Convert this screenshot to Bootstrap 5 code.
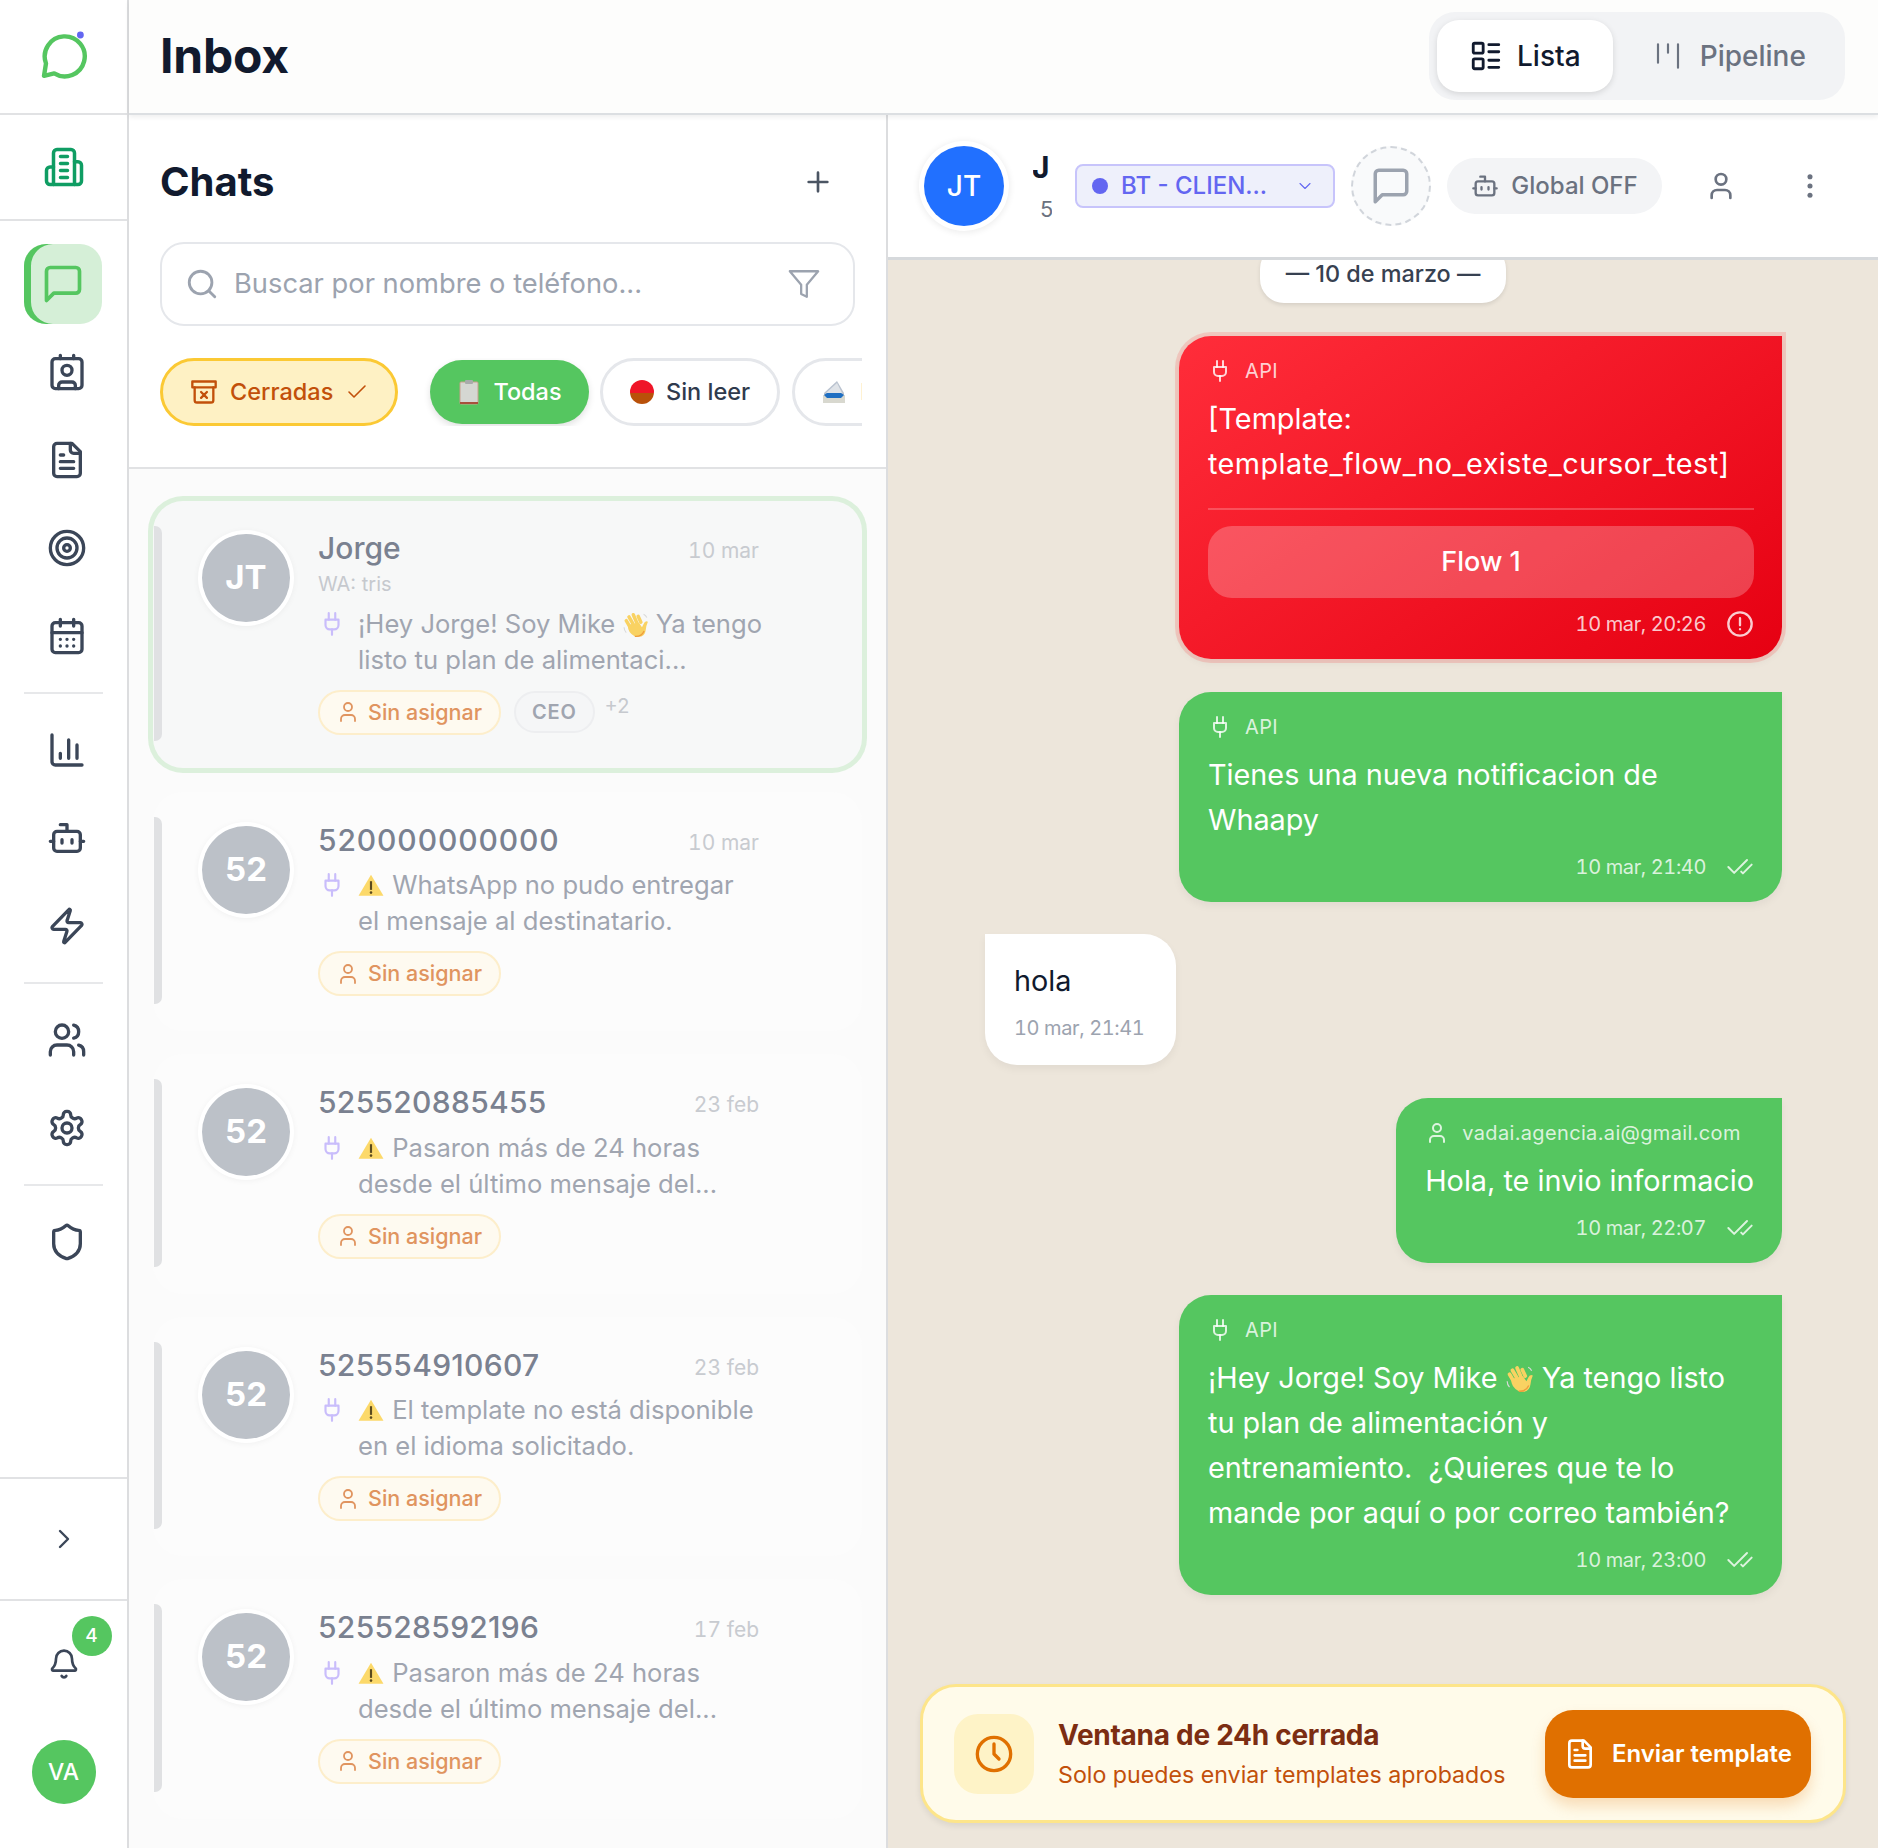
<!DOCTYPE html>
<html lang="es">
<head>
    <meta charset="UTF-8">
    <meta name="viewport" content="width=device-width, initial-scale=1.0">
    <title>Inbox</title>
    <link href="https://cdn.jsdelivr.net/npm/bootstrap@5.3.0/dist/css/bootstrap.min.css" rel="stylesheet">
    <style>
        body { font-family: "Inter", "Noto Sans", sans-serif; background: #fff; color: #111827; }
        .ico { fill: none; stroke: currentColor; stroke-width: 2; stroke-linecap: round; stroke-linejoin: round; flex-shrink: 0; }

        /* left rail */
        .rail { width: 129px; flex-shrink: 0; border-right: 2px solid #dcdddf; background: #fff; }
        .rail-logo { height: 115px; padding-bottom: 4px; border-bottom: 2px solid #e1e2e4; }
        .rail-org { height: 106px; border-bottom: 2px solid #e1e2e4; color: #0f9d63; }
        .rail-nav { padding: 23px 24px 0; }
        .rail-item { width: 78px; height: 80px; margin-bottom: 8px; padding-left: 8px; color: #3b4658; border-radius: 22px; }
        .rail-item.is-active { padding-left: 0; color: #55c660; background: #d5efd7; box-shadow: inset 7px 0 0 #55c660; }
        .rail-sep { height: 2px; background: #e7e8ea; margin: 16px 0; }
        .rail-toggle { height: 122px; border-top: 2px solid #e1e2e4; color: #3b4658; }
        .rail-foot { border-top: 2px solid #e1e2e4; padding-top: 43px; height: 249px; color: #3b4658; }
        .bell-wrap { width: 40px; height: 40px; margin-bottom: 56px; }
        .bell-count { top: -28px; left: 28px; width: 40px; height: 40px; background: #55c660; color: #fff; font-size: 19px; font-weight: 500; }
        .me-avatar { width: 64px; height: 64px; background: #55c660; color: #fff; font-size: 23px; font-weight: 500; }

        /* top bar */
        .top-bar { height: 115px; padding: 0 33px 1px 31px; background: #fdfdfc; border-bottom: 2px solid #dcdfe2; box-shadow: 0 2px 5px rgba(0,0,0,.07); position: relative; z-index: 5; }
        .page-title { font-size: 48px; font-weight: 700; letter-spacing: -.005em; color: #111a2e; margin: 0; }
        .view-switch { width: 416px; height: 88px; padding: 8px; background: #f2f3f5; border-radius: 26px; }
        .view-btn { height: 72px; font-size: 28px; font-weight: 500; border: 0; border-radius: 22px; gap: 14px; color: #6b7280; padding: 0; }
        .view-btn.is-on { width: 176px; background: #fff; color: #111a2e; box-shadow: 0 2px 6px rgba(0,0,0,.12); }
        .view-btn.is-off { width: 225px; padding-left: 4px; gap: 12px; }

        /* chat list */
        .list-pane { width: 759px; flex-shrink: 0; border-right: 2px solid #dcdddf; background: #fbfbfb; }
        .list-head { background: #fff; padding: 43px 0 41px 31px; border-bottom: 2px solid #e1e2e4; }
        .list-title { font-size: 40px; font-weight: 700; color: #111a2e; margin: 0; line-height: 48px; }
        .add-chat { color: #4b5563; margin-right: 52px; }
        .search-box { width: 695px; height: 84px; margin: 36px 0 32px; padding: 0 32px 0 23px; border: 2px solid #e5e7eb; border-radius: 24px; color: #9ca3af; background: #fff; }
        .search-box .form-control { font-size: 27.3px; padding: 1px 0 0 15px; border: 0; box-shadow: none; color: #374151; background: transparent; }
        .search-box .form-control::placeholder { color: #9ca3af; }
        .filter-row { width: 702px; overflow: hidden; }
        .filter-chip { flex-shrink: 0; height: 68px; font-size: 23.5px; font-weight: 500; border: 3px solid #e5e7eb; border-radius: 34px; color: #2f3a4d; background: #fff; gap: 12px; padding: 0 27px; }
        .chip-closed { width: 238px; background: #fef1c4; border-color: #fbc934; color: #c2500a; margin-right: 32px; padding: 0 0 0 27px; }
        .chip-all { height: 64px; width: 159px; background: #55c660; border: 0; color: #fff; margin-right: 11px; box-shadow: 0 3px 7px rgba(0,0,0,.12); }
        .chip-rest { margin-left: 12px; width: 200px; justify-content: flex-start; gap: 14px; }

        .list-body { padding: 32px 24px 0; }
        .chat-row { margin-bottom: 23px; padding: 30px 0 35px 49px; gap: 28px; background: #fcfcfc; border-radius: 30px; }
        .chat-row.is-open { background: #f7f8f8; box-shadow: 0 0 0 5px #dcf0dc; margin-bottom: 24px; padding: 29px 0 33px 49px; }
        .row-bar { left: 1px; top: 25px; bottom: 27px; width: 8px; background: #e0e1e3; border-radius: 0 7px 7px 0; }
        .row-avatar { width: 88px; height: 88px; margin-top: 4px; background: #bcc1c8; color: #fff; font-size: 33px; font-weight: 700; box-shadow: 0 0 0 4px #fff, 0 1px 7px 3px rgba(0,0,0,.06); flex-shrink: 0; }
        .row-main { width: 441px; }
        .row-name { font-size: 30px; font-weight: 500; line-height: 36px; color: #7a8190; }
        .row-phone { letter-spacing: .3px; }
        .row-phone.is-zeros { letter-spacing: .9px; }
        .row-date { font-size: 21px; color: #c8cbd0; font-feature-settings: "tnum"; margin-top: 5px; }
        .row-wa { font-size: 20px; color: #c6c9ce; line-height: 24px; margin: 5px 0 10px; }
        .row-text { font-size: 25.6px; line-height: 36px; color: #a0a5b0; margin: 9px 0 12px; gap: 13px; white-space: nowrap; }
        .is-open .row-text { margin-top: 0; }
        .row-plug { color: #c9bdfb; margin: 5px 0 0 1px; }
        .warn-mark { vertical-align: -4px; margin-right: 1px; }
        .wave-mark { vertical-align: -5px; }
        .tag-open { height: 45px; padding: 0 17px 0 16px; font-size: 21.5px; font-weight: 500; color: #e0945f; background: #fefaf0; border: 2px solid #fdeecb; border-radius: 23px; gap: 8px; }
        .tag-role { height: 42px; padding: 0 16px; font-size: 20px; font-weight: 600; letter-spacing: .04em; color: #a0a5b0; background: #f5f6f7; border: 2px solid #edeef0; border-radius: 21px; margin-left: 13px; }
        .tag-more { font-size: 20px; color: #c6c9ce; margin: -12px 0 0 10px; }

        /* conversation */
        .conv-head { height: 145px; padding-left: 31px; background: #fff; border-bottom: 3px solid #d6d9dc; position: relative; z-index: 4; }
        .conv-avatar { width: 80px; height: 80px; background: #2170ff; color: #fff; font-size: 28px; font-weight: 500; box-shadow: 0 0 0 5px #fff, 0 1px 6px 6px rgba(0,0,0,.07); margin-left: 5px; flex-shrink: 0; }
        .conv-who { width: 19px; margin: 0 23px 0 29px; overflow: hidden; white-space: nowrap; }
        .conv-who-name { font-size: 30px; font-weight: 700; line-height: 38px; color: #111a2e; margin-left: -1px; }
        .conv-who-tel { font-size: 22px; line-height: 30px; margin: 8px 0 0 7px; color: #6b7280; }
        .stage-pick { width: 260px; height: 44px; padding: 0 18px 0 15px; background: #eef0fb; border: 2px solid #c7c4fb; border-radius: 8px; color: #6366f1; font-size: 24px; font-weight: 500; }
        .stage-dot { width: 16px; height: 16px; background: #6366f1; margin-right: 13px; }
        .note-btn { width: 80px; height: 80px; margin: 0 16px 0 16px; border: 2px dashed #d1d5db; background: #f9fafb; color: #9ca3af; border-radius: 50%; }
        .bot-pill { width: 215px; height: 56px; gap: 12px; background: #f3f4f6; color: #6b7280; font-size: 24px; font-weight: 500; border-radius: 28px; }
        .head-icon { color: #6b7280; }

        .conv-body { background: #ede6db; min-height: 0; }
        .date-pill { margin-top: -15px; width: 246px; height: 58px; padding-top: 11px; background: #fff; border-radius: 24px; font-size: 23.4px; font-weight: 500; color: #374151; box-shadow: 0 2px 4px rgba(0,0,0,.1); }
        .thread { padding: 33px 96px 0 97px; gap: 32.5px; min-height: 0; }
        .bubble { font-size: 28.8px; line-height: 45px; padding: 21px 28px 21px 29px; border-radius: 0 32px 32px 32px; color: #fff; background: #55c660; box-shadow: 0 4px 8px rgba(0,0,0,.05); }
        .bubble.is-wide { width: 603px; }
        .bubble.is-out { border-radius: 32px 0 32px 32px; align-self: flex-end; }
        .bubble.is-fail { background: linear-gradient(145deg, #ff2d3a, #e60012); box-shadow: 0 0 0 4px rgba(255,50,50,.17), 0 4px 8px rgba(0,0,0,.05); }
        .bubble.is-in { align-self: flex-start; background: #fff; color: #111a2e; padding: 24px 32px 23px 29px; }
        .bubble-from { font-size: 20px; line-height: 28px; margin-bottom: 11px; gap: 13px; letter-spacing: .35px; color: rgba(255,255,255,.8); }
        .bubble-time { font-size: 20px; line-height: 28px; margin-top: 11px; gap: 20px; letter-spacing: -.4px; color: rgba(255,255,255,.8); white-space: nowrap; font-feature-settings: "tnum"; }
        .is-in .bubble-time { color: #9ca3af; }
        .bubble-rule { height: 2px; background: rgba(255,255,255,.22); margin: 22px 0 16px; }
        .flow-btn { height: 72px; font-size: 27px; font-weight: 500; color: #fff; background: rgba(255,255,255,.24); border: 0; border-radius: 24px; }
        .is-fail .bubble-time { margin-top: 12px; }
        .tpl-name { letter-spacing: .45px; }

        .closed-bar { margin: 0 32px 25px; height: 139px; padding: 0 32px 0 31px; background: #fffbea; border: 3px solid #fde58a; border-radius: 36px; box-shadow: 0 3px 6px rgba(0,0,0,.08); flex-shrink: 0; }
        .closed-icon { width: 80px; height: 80px; background: #fef3c7; border-radius: 24px; color: #e07000; margin-right: 24px; flex-shrink: 0; }
        .closed-title { font-size: 28px; font-weight: 700; color: #7c2d12; line-height: 36px; letter-spacing: -.01em; }
        .closed-sub { font-size: 23.2px; color: #c2500a; line-height: 32px; margin-top: 6px; }
        .closed-btn { width: 266px; height: 88px; gap: 16px; background: #e07000; color: #fff; font-size: 24px; font-weight: 600; border: 0; border-radius: 28px; padding: 0; box-shadow: 0 8px 14px rgba(224,112,0,.22); }
    </style>
</head>
<body>

<!-- icon sprite -->
<svg class="d-none">
    <symbol id="i-org" viewBox="0 0 24 24"><path d="M6 22V4a2 2 0 0 1 2-2h8a2 2 0 0 1 2 2v18Z"/><path d="M6 12H4a2 2 0 0 0-2 2v6a2 2 0 0 0 2 2h2"/><path d="M18 9h2a2 2 0 0 1 2 2v9a2 2 0 0 1-2 2h-2"/><path d="M10 6h4M10 10h4M10 14h4M10 18h4"/></symbol>
    <symbol id="i-msg" viewBox="0 0 24 24"><path d="M21 15a2 2 0 0 1-2 2H7l-4 4V5a2 2 0 0 1 2-2h14a2 2 0 0 1 2 2z"/></symbol>
    <symbol id="i-contact" viewBox="0 0 24 24"><path d="M16 2v2M8 2v2M7 22v-2a2 2 0 0 1 2-2h6a2 2 0 0 1 2 2v2"/><circle cx="12" cy="11" r="3"/><rect x="3" y="4" width="18" height="18" rx="2"/></symbol>
    <symbol id="i-doc" viewBox="0 0 24 24"><path d="M15 2H6a2 2 0 0 0-2 2v16a2 2 0 0 0 2 2h12a2 2 0 0 0 2-2V7Z"/><path d="M14 2v4a2 2 0 0 0 2 2h4"/><path d="M10 9H8M16 13H8M16 17H8"/></symbol>
    <symbol id="i-target" viewBox="0 0 24 24"><circle cx="12" cy="12" r="10"/><circle cx="12" cy="12" r="6"/><circle cx="12" cy="12" r="2"/></symbol>
    <symbol id="i-cal" viewBox="0 0 24 24"><path d="M8 2v4M16 2v4"/><rect x="3" y="4" width="18" height="18" rx="2"/><path d="M3 10h18M8 14h.01M12 14h.01M16 14h.01M8 18h.01M12 18h.01M16 18h.01"/></symbol>
    <symbol id="i-chart" viewBox="0 0 24 24"><path d="M3 3v16a2 2 0 0 0 2 2h16"/><path d="M8 17v-3M13 17V6M18 17V9"/></symbol>
    <symbol id="i-bot" viewBox="0 0 24 24"><path d="M12 8V4H8"/><rect x="4" y="8" width="16" height="12" rx="2"/><path d="M2 14h2M20 14h2M15 13v2M9 13v2"/></symbol>
    <symbol id="i-zap" viewBox="0 0 24 24"><path d="M4 14a1 1 0 0 1-.78-1.63l9.9-10.2a.5.5 0 0 1 .86.46l-1.92 6.02A1 1 0 0 0 13 10h7a1 1 0 0 1 .78 1.63l-9.9 10.2a.5.5 0 0 1-.86-.46l1.92-6.02A1 1 0 0 0 11 14z"/></symbol>
    <symbol id="i-users" viewBox="0 0 24 24"><path d="M16 21v-2a4 4 0 0 0-4-4H6a4 4 0 0 0-4 4v2"/><circle cx="9" cy="7" r="4"/><path d="M22 21v-2a4 4 0 0 0-3-3.87M16 3.13a4 4 0 0 1 0 7.75"/></symbol>
    <symbol id="i-gear" viewBox="0 0 24 24"><path d="M12.22 2h-.44a2 2 0 0 0-2 2v.18a2 2 0 0 1-1 1.73l-.43.25a2 2 0 0 1-2 0l-.15-.08a2 2 0 0 0-2.73.73l-.22.38a2 2 0 0 0 .73 2.73l.15.1a2 2 0 0 1 1 1.72v.51a2 2 0 0 1-1 1.74l-.15.09a2 2 0 0 0-.73 2.73l.22.38a2 2 0 0 0 2.73.73l.15-.08a2 2 0 0 1 2 0l.43.25a2 2 0 0 1 1 1.73V20a2 2 0 0 0 2 2h.44a2 2 0 0 0 2-2v-.18a2 2 0 0 1 1-1.73l.43-.25a2 2 0 0 1 2 0l.15.08a2 2 0 0 0 2.73-.73l.22-.39a2 2 0 0 0-.73-2.73l-.15-.08a2 2 0 0 1-1-1.74v-.5a2 2 0 0 1 1-1.74l.15-.09a2 2 0 0 0 .73-2.73l-.22-.38a2 2 0 0 0-2.73-.73l-.15.08a2 2 0 0 1-2 0l-.43-.25a2 2 0 0 1-1-1.73V4a2 2 0 0 0-2-2z"/><circle cx="12" cy="12" r="3"/></symbol>
    <symbol id="i-shield" viewBox="0 0 24 24"><path d="M20 13c0 5-3.5 7.5-7.66 8.95a1 1 0 0 1-.67-.01C7.5 20.5 4 18 4 13V6a1 1 0 0 1 1-1c2 0 4.5-1.2 6.24-2.72a1.17 1.17 0 0 1 1.52 0C14.51 3.81 17 5 19 5a1 1 0 0 1 1 1z"/></symbol>
    <symbol id="i-bell" viewBox="0 0 24 24"><path d="M10.268 21a2 2 0 0 0 3.464 0"/><path d="M3.262 15.326A1 1 0 0 0 4 17h16a1 1 0 0 0 .74-1.673C19.41 13.956 18 12.499 18 8A6 6 0 0 0 6 8c0 4.499-1.411 5.956-2.738 7.326"/></symbol>
    <symbol id="i-plug" viewBox="0 0 24 24"><path d="M12 22v-5M9 8V2M15 8V2"/><path d="M18 8v5a4 4 0 0 1-4 4h-4a4 4 0 0 1-4-4V8Z"/></symbol>
    <symbol id="i-user" viewBox="0 0 24 24"><path d="M19 21v-2a4 4 0 0 0-4-4H9a4 4 0 0 0-4 4v2"/><circle cx="12" cy="7" r="4"/></symbol>
    <symbol id="i-double" viewBox="0 0 24 24"><path d="M18 6 7 17l-5-5"/><path d="m22 10-7.5 7.5L13 16"/></symbol>
    <symbol id="i-warn" viewBox="0 0 24 24"><path d="M12 2.5 23.5 22H.5Z" fill="#fcd96a" stroke="none"/><rect x="11" y="8.5" width="2" height="8" fill="#5b4a1e" stroke="none"/><circle cx="12" cy="19" r="1.2" fill="#5b4a1e" stroke="none"/></symbol>
    <symbol id="i-wave" viewBox="0 0 24 24"><g stroke="#f9d262" stroke-width="3.2" fill="none" stroke-linecap="round"><path d="M6 13 3 8"/><path d="M9 10.500 5.500 4.500"/><path d="M12.500 9.500 9.500 2.500"/><path d="M16.500 9.500 14 4"/></g><path d="M4.500 12q-.5 7 6.500 10.500 9 2 10-6 0-3 2-7.500-2.500-1.500-4 2l-1.500 3-3-4.500z" fill="#f9d262" stroke="none"/><path d="M11 22.500q6 .5 8.500-5" stroke="#ef9d3c" stroke-width="1.2" fill="none"/><path d="M1 14q0 3 2 5M19 2q2 1 3 3" stroke="#d9d9d9" stroke-width="1" fill="none"/></symbol>
</svg>

<div class="d-flex vh-100 overflow-hidden">

    <!-- left rail -->
    <aside class="rail d-flex flex-column">
        <div class="rail-logo d-flex align-items-center justify-content-center">
            <svg width="52" height="52" viewBox="0 0 26 26" fill="none" stroke-linecap="round" stroke-linejoin="round">
                <path d="M8.100 22.200A10 10 0 1 0 4 17.200L3 23.400Z" stroke="#55c660" stroke-width="2.200"/>
                <circle cx="21.200" cy="3" r="1.700" fill="#6366f1"/>
            </svg>
        </div>
        <div class="rail-org d-flex align-items-center justify-content-center">
            <svg class="ico" width="42" height="42"><use href="#i-org"/></svg>
        </div>
        <nav class="rail-nav flex-grow-1">
            <div class="rail-item is-active d-flex align-items-center justify-content-center"><svg class="ico" width="44" height="44"><use href="#i-msg"/></svg></div>
            <div class="rail-item d-flex align-items-center justify-content-center"><svg class="ico" width="40" height="40"><use href="#i-contact"/></svg></div>
            <div class="rail-item d-flex align-items-center justify-content-center"><svg class="ico" width="40" height="40"><use href="#i-doc"/></svg></div>
            <div class="rail-item d-flex align-items-center justify-content-center"><svg class="ico" width="40" height="40"><use href="#i-target"/></svg></div>
            <div class="rail-item d-flex align-items-center justify-content-center"><svg class="ico" width="40" height="40"><use href="#i-cal"/></svg></div>
            <div class="rail-sep"></div>
            <div class="rail-item d-flex align-items-center justify-content-center"><svg class="ico" width="40" height="40"><use href="#i-chart"/></svg></div>
            <div class="rail-item d-flex align-items-center justify-content-center"><svg class="ico" width="40" height="40"><use href="#i-bot"/></svg></div>
            <div class="rail-item d-flex align-items-center justify-content-center"><svg class="ico" width="40" height="40"><use href="#i-zap"/></svg></div>
            <div class="rail-sep"></div>
            <div class="rail-item d-flex align-items-center justify-content-center"><svg class="ico" width="40" height="40"><use href="#i-users"/></svg></div>
            <div class="rail-item d-flex align-items-center justify-content-center"><svg class="ico" width="40" height="40"><use href="#i-gear"/></svg></div>
            <div class="rail-sep"></div>
            <div class="rail-item d-flex align-items-center justify-content-center"><svg class="ico" width="40" height="40"><use href="#i-shield"/></svg></div>
        </nav>
        <div class="rail-toggle d-flex align-items-center justify-content-center">
            <svg class="ico" width="32" height="32" viewBox="0 0 24 24" style="stroke-width:1.8"><path d="m9 18 6-6-6-6"/></svg>
        </div>
        <div class="rail-foot d-flex flex-column align-items-center">
            <div class="bell-wrap position-relative d-flex align-items-center justify-content-center">
                <svg class="ico" width="32" height="32"><use href="#i-bell"/></svg>
                <span class="bell-count position-absolute rounded-circle d-flex align-items-center justify-content-center">4</span>
            </div>
            <div class="me-avatar rounded-circle d-flex align-items-center justify-content-center">VA</div>
        </div>
    </aside>

    <div class="flex-grow-1 d-flex flex-column" style="min-width:0">
        <!-- top bar -->
        <header class="top-bar d-flex align-items-center justify-content-between flex-shrink-0">
            <h1 class="page-title">Inbox</h1>
            <div class="view-switch d-flex">
                <button class="btn view-btn is-on d-flex align-items-center justify-content-center">
                    <svg class="ico" width="34" height="34" viewBox="0 0 24 24"><rect x="3" y="3" width="7" height="7" rx="1"/><rect x="3" y="14" width="7" height="7" rx="1"/><path d="M14 4h7M14 9h7M14 15h7M14 20h7"/></svg>
                    Lista
                </button>
                <button class="btn view-btn is-off d-flex align-items-center justify-content-center">
                    <svg class="ico" width="40" height="40" viewBox="0 0 24 24" style="stroke-width:1.3"><path d="M6 5v11M12 5v5M18 5v14"/></svg>
                    Pipeline
                </button>
            </div>
        </header>

        <div class="d-flex flex-grow-1" style="min-height:0">
            <!-- chat list -->
            <section class="list-pane d-flex flex-column overflow-hidden">
                <div class="list-head">
                    <div class="d-flex align-items-center justify-content-between">
                        <h2 class="list-title">Chats</h2>
                        <svg class="add-chat ico" width="32" height="32" viewBox="0 0 24 24"><path d="M5 12h14M12 5v14"/></svg>
                    </div>
                    <div class="search-box d-flex align-items-center">
                        <svg class="ico" width="34" height="34" viewBox="0 0 24 24"><circle cx="11" cy="11" r="8"/><path d="m21 21-4.3-4.3"/></svg>
                        <input class="form-control" type="text" placeholder="Buscar por nombre o teléfono...">
                        <svg class="ico" width="34" height="34" viewBox="0 0 24 24" style="stroke-width:1.6"><path d="M22 3H2l8 9.46V19l4 2v-8.54L22 3z"/></svg>
                    </div>
                    <div class="filter-row d-flex align-items-center">
                        <div class="filter-chip chip-closed d-flex align-items-center">
                            <svg class="ico" width="28" height="28" viewBox="0 0 24 24"><rect x="2" y="3" width="20" height="5"/><path d="M4 8v11a2 2 0 0 0 2 2h12a2 2 0 0 0 2-2V8"/><path d="m9.500 17 5-5M9.500 12l5 5"/></svg>
                            Cerradas
                            <svg class="ico" width="24" height="24" viewBox="0 0 24 24" style="stroke-width:1.6"><path d="M20 6 9 17l-5-5"/></svg>
                        </div>
                        <div class="filter-chip chip-all d-flex align-items-center justify-content-center">
                            <svg width="24" height="26" viewBox="0 0 24 26"><rect x="3" y="3" width="18" height="22" rx="1" fill="#d5d7d2" stroke="#c9a08c"/><rect x="8" y="1" width="8" height="4" rx="1" fill="#a8abab"/><rect x="3" y="23" width="18" height="2" fill="#a8503c"/></svg>
                            Todas
                        </div>
                        <div class="filter-chip d-flex align-items-center">
                            <svg width="24" height="24" viewBox="0 0 24 24"><defs><linearGradient id="red-dot" x1="0" y1="0" x2="0" y2="1"><stop offset=".55" stop-color="#ef1528"/><stop offset=".56" stop-color="#b9510a"/></linearGradient></defs><circle cx="12" cy="12" r="12" fill="url(#red-dot)"/></svg>
                            Sin leer
                        </div>
                        <div class="filter-chip chip-rest d-flex align-items-center">
                            <svg width="24" height="24" viewBox="0 0 24 24"><path d="M2 13 15 1l7 12v4H2z" fill="#b9c2cf"/><path d="M4 13 15 3l5 10z" fill="#dfe3e8"/><path d="M1 15h22v8H1z" fill="#d8d8cf"/><path d="M5 13h14l3 2-3 3H5l-3-3z" fill="#1f6fc2"/></svg>
                            Leídas
                        </div>
                    </div>
                </div>

                <div class="list-body flex-grow-1">
                    <div class="chat-row is-open position-relative d-flex">
                        <span class="row-bar position-absolute"></span>
                        <div class="row-avatar rounded-circle d-flex align-items-center justify-content-center">JT</div>
                        <div class="row-main">
                            <div class="d-flex justify-content-between align-items-center"><span class="row-name">Jorge</span><span class="row-date">10 mar</span></div>
                            <div class="row-wa">WA: tris</div>
                            <div class="row-text d-flex">
                                <svg class="row-plug ico" width="26" height="26"><use href="#i-plug"/></svg>
                                <div>¡Hey Jorge! Soy Mike <svg width="26" height="26" class="wave-mark"><use href="#i-wave"/></svg> Ya tengo<br>listo tu plan de alimentaci...</div>
                            </div>
                            <div class="d-flex align-items-center">
                                <span class="tag-open d-inline-flex align-items-center"><svg class="ico" width="24" height="24" style="stroke-width:1.8"><use href="#i-user"/></svg>Sin asignar</span>
                                <span class="tag-role d-inline-flex align-items-center">CEO</span>
                                <span class="tag-more">+2</span>
                            </div>
                        </div>
                    </div>

                    <div class="chat-row position-relative d-flex">
                        <span class="row-bar position-absolute"></span>
                        <div class="row-avatar rounded-circle d-flex align-items-center justify-content-center">52</div>
                        <div class="row-main">
                            <div class="d-flex justify-content-between align-items-center"><span class="row-name row-phone is-zeros">520000000000</span><span class="row-date">10 mar</span></div>
                            <div class="row-text d-flex">
                                <svg class="row-plug ico" width="26" height="26"><use href="#i-plug"/></svg>
                                <div><svg width="26" height="26" class="warn-mark"><use href="#i-warn"/></svg> WhatsApp no pudo entregar<br>el mensaje al destinatario.</div>
                            </div>
                            <span class="tag-open d-inline-flex align-items-center"><svg class="ico" width="24" height="24" style="stroke-width:1.8"><use href="#i-user"/></svg>Sin asignar</span>
                        </div>
                    </div>

                    <div class="chat-row position-relative d-flex">
                        <span class="row-bar position-absolute"></span>
                        <div class="row-avatar rounded-circle d-flex align-items-center justify-content-center">52</div>
                        <div class="row-main">
                            <div class="d-flex justify-content-between align-items-center"><span class="row-name row-phone">525520885455</span><span class="row-date">23 feb</span></div>
                            <div class="row-text d-flex">
                                <svg class="row-plug ico" width="26" height="26"><use href="#i-plug"/></svg>
                                <div><svg width="26" height="26" class="warn-mark"><use href="#i-warn"/></svg> Pasaron más de 24 horas<br>desde el último mensaje del...</div>
                            </div>
                            <span class="tag-open d-inline-flex align-items-center"><svg class="ico" width="24" height="24" style="stroke-width:1.8"><use href="#i-user"/></svg>Sin asignar</span>
                        </div>
                    </div>

                    <div class="chat-row position-relative d-flex">
                        <span class="row-bar position-absolute"></span>
                        <div class="row-avatar rounded-circle d-flex align-items-center justify-content-center">52</div>
                        <div class="row-main">
                            <div class="d-flex justify-content-between align-items-center"><span class="row-name row-phone">525554910607</span><span class="row-date">23 feb</span></div>
                            <div class="row-text d-flex">
                                <svg class="row-plug ico" width="26" height="26"><use href="#i-plug"/></svg>
                                <div><svg width="26" height="26" class="warn-mark"><use href="#i-warn"/></svg> El template no está disponible<br>en el idioma solicitado.</div>
                            </div>
                            <span class="tag-open d-inline-flex align-items-center"><svg class="ico" width="24" height="24" style="stroke-width:1.8"><use href="#i-user"/></svg>Sin asignar</span>
                        </div>
                    </div>

                    <div class="chat-row position-relative d-flex">
                        <span class="row-bar position-absolute"></span>
                        <div class="row-avatar rounded-circle d-flex align-items-center justify-content-center">52</div>
                        <div class="row-main">
                            <div class="d-flex justify-content-between align-items-center"><span class="row-name row-phone">525528592196</span><span class="row-date">17 feb</span></div>
                            <div class="row-text d-flex">
                                <svg class="row-plug ico" width="26" height="26"><use href="#i-plug"/></svg>
                                <div><svg width="26" height="26" class="warn-mark"><use href="#i-warn"/></svg> Pasaron más de 24 horas<br>desde el último mensaje del...</div>
                            </div>
                            <span class="tag-open d-inline-flex align-items-center"><svg class="ico" width="24" height="24" style="stroke-width:1.8"><use href="#i-user"/></svg>Sin asignar</span>
                        </div>
                    </div>
                </div>
            </section>

            <!-- conversation -->
            <section class="flex-grow-1 d-flex flex-column" style="min-width:0">
                <div class="conv-head d-flex align-items-center flex-shrink-0">
                    <div class="conv-avatar rounded-circle d-flex align-items-center justify-content-center">JT</div>
                    <div class="conv-who">
                        <div class="conv-who-name">J</div>
                        <div class="conv-who-tel">5</div>
                    </div>
                    <div class="stage-pick d-flex align-items-center">
                        <span class="stage-dot rounded-circle flex-shrink-0"></span>
                        <span class="flex-grow-1">BT - CLIEN...</span>
                        <svg class="ico" width="20" height="20" viewBox="0 0 24 24" style="stroke-width:1.3"><path d="m6 9 6 6 6-6"/></svg>
                    </div>
                    <div class="note-btn d-flex align-items-center justify-content-center"><svg class="ico" width="42" height="42"><use href="#i-msg"/></svg></div>
                    <div class="bot-pill d-flex align-items-center justify-content-center"><svg class="ico" width="28" height="28"><use href="#i-bot"/></svg>Global OFF</div>
                    <svg class="head-icon ico ms-auto" width="32" height="32" style="margin-right:57px"><use href="#i-user"/></svg>
                    <svg class="head-icon" width="32" height="32" viewBox="0 0 24 24" fill="currentColor" style="margin-right:52px"><circle cx="12" cy="5" r="1.9"/><circle cx="12" cy="12" r="1.9"/><circle cx="12" cy="19" r="1.9"/></svg>
                </div>

                <div class="conv-body flex-grow-1 d-flex flex-column">
                    <div class="date-pill align-self-center text-center flex-shrink-0">— 10 de marzo —</div>
                    <div class="thread flex-grow-1 d-flex flex-column">
                        <div class="bubble is-out is-fail is-wide">
                            <div class="bubble-from d-flex align-items-center"><svg class="ico" width="24" height="24"><use href="#i-plug"/></svg>API</div>
                            [Template:<br><span class="tpl-name">template_flow_no_existe_cursor_test]</span>
                            <div class="bubble-rule"></div>
                            <button class="btn flow-btn w-100 d-block">Flow 1</button>
                            <div class="bubble-time d-flex align-items-center justify-content-end">10 mar, 20:26
                                <svg class="ico" width="28" height="28" viewBox="0 0 24 24"><circle cx="12" cy="12" r="10"/><path d="M12 7v6M12 16.500h.01"/></svg>
                            </div>
                        </div>

                        <div class="bubble is-out is-wide">
                            <div class="bubble-from d-flex align-items-center"><svg class="ico" width="24" height="24"><use href="#i-plug"/></svg>API</div>
                            Tienes una nueva notificacion de<br>Whaapy
                            <div class="bubble-time d-flex align-items-center justify-content-end">10 mar, 21:40 <svg class="ico" width="28" height="28" style="stroke-width:1.7"><use href="#i-double"/></svg></div>
                        </div>

                        <div class="bubble is-in">
                            hola
                            <div class="bubble-time">10 mar, 21:41</div>
                        </div>

                        <div class="bubble is-out">
                            <div class="bubble-from d-flex align-items-center"><svg class="ico" width="24" height="24"><use href="#i-user"/></svg>vadai.agencia.ai@gmail.com</div>
                            Hola, te invio informacio
                            <div class="bubble-time d-flex align-items-center justify-content-end">10 mar, 22:07 <svg class="ico" width="28" height="28" style="stroke-width:1.7"><use href="#i-double"/></svg></div>
                        </div>

                        <div class="bubble is-out is-wide">
                            <div class="bubble-from d-flex align-items-center"><svg class="ico" width="24" height="24"><use href="#i-plug"/></svg>API</div>
                            ¡Hey Jorge! Soy Mike <svg width="28" height="28" class="wave-mark"><use href="#i-wave"/></svg> Ya tengo listo<br>tu plan de alimentación y<br>entrenamiento.&nbsp; ¿Quieres que te lo<br>mande por aquí o por correo también?
                            <div class="bubble-time d-flex align-items-center justify-content-end">10 mar, 23:00 <svg class="ico" width="28" height="28" style="stroke-width:1.7"><use href="#i-double"/></svg></div>
                        </div>
                    </div>

                    <div class="closed-bar d-flex align-items-center">
                        <div class="closed-icon d-flex align-items-center justify-content-center">
                            <svg class="ico" width="40" height="40" viewBox="0 0 24 24"><circle cx="12" cy="12" r="10"/><path d="M12 6v6l3 3"/></svg>
                        </div>
                        <div class="flex-grow-1">
                            <div class="closed-title">Ventana de 24h cerrada</div>
                            <div class="closed-sub">Solo puedes enviar templates aprobados</div>
                        </div>
                        <button class="btn closed-btn d-flex align-items-center justify-content-center">
                            <svg class="ico" width="32" height="32"><use href="#i-doc"/></svg>
                            Enviar template
                        </button>
                    </div>
                </div>
            </section>
        </div>
    </div>
</div>

<script src="https://cdn.jsdelivr.net/npm/bootstrap@5.3.0/dist/js/bootstrap.bundle.min.js"></script>
</body>
</html>
